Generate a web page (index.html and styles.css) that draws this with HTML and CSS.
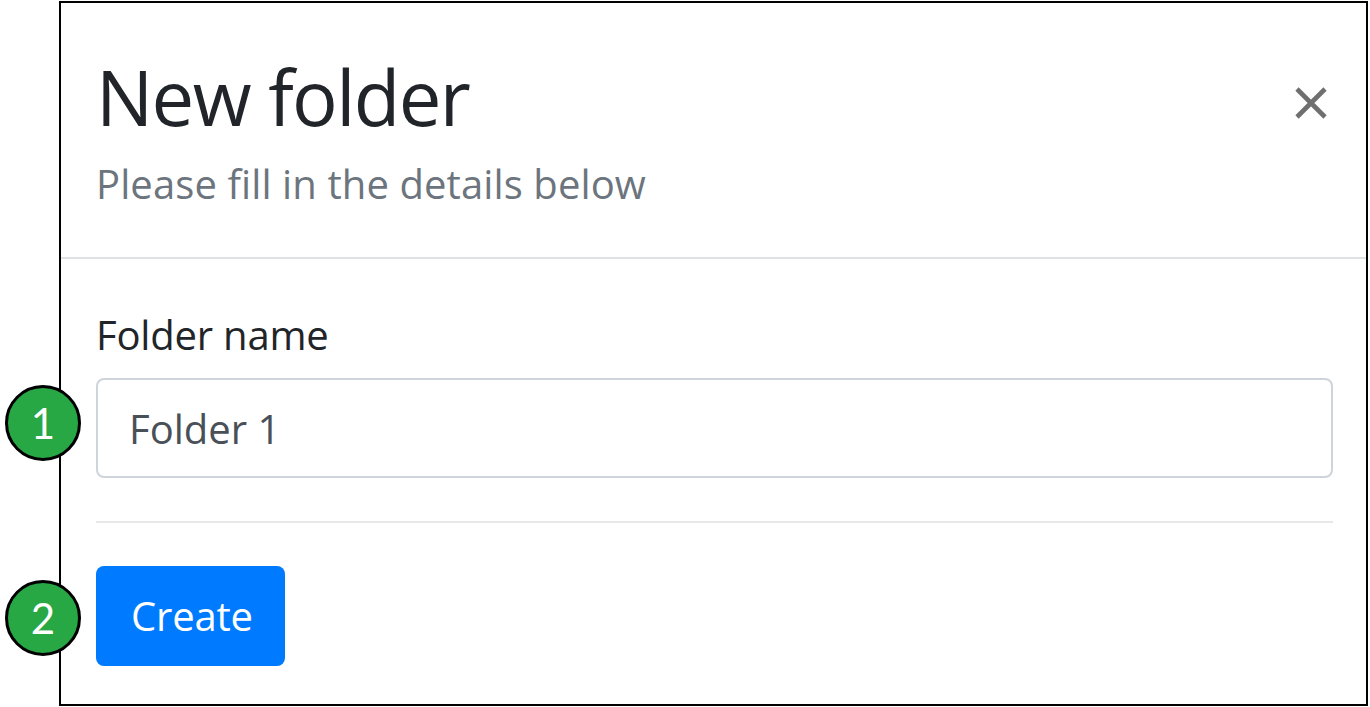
FILE: index.html
```html
<!DOCTYPE html>
<html lang="en">
<head>
<meta charset="utf-8">
<title>New folder</title>
<link rel="stylesheet" href="styles.css">
</head>
<body>
<div class="frame">
  <div class="header">
    <div class="heading">
      <h1 class="title">New folder</h1>
      <p class="subtitle">Please fill in the details below</p>
    </div>
    <button class="close" type="button" aria-label="Close">
      <svg width="32" height="32" viewBox="0 0 32 32"><path d="M2 2 L30 30 M30 2 L2 30" stroke="#6f6f6f" stroke-width="4.6" fill="none"/></svg>
    </button>
  </div>
  <div class="body">
    <label class="label" for="fname">Folder name</label>
    <div class="field">
      <span class="badge badge-1">1</span>
      <input id="fname" class="input" type="text" value="Folder 1">
    </div>
    <hr class="divider">
    <div class="actions">
      <span class="badge badge-2">2</span>
      <button class="btn" type="button">Create</button>
    </div>
  </div>
</div>
</body>
</html>
```
FILE: styles.css
```css
html, body {
  margin: 0;
  padding: 0;
  background: #ffffff;
}
body {
  font-family: "Open Sans", "Noto Sans", sans-serif;
  color: #212529;
  padding-top: 1px;
}
.frame {
  margin-left: 59px;
  width: 1309px;
  height: 705px;
  box-sizing: border-box;
  border: 2px solid #000;
  background: #fff;
}
.header {
  display: flex;
  justify-content: space-between;
  align-items: flex-start;
  padding: 54px 35px 49px 35px;
  border-bottom: 2px solid #dee2e6;
}
.title {
  margin: 0;
  font-size: 76px;
  line-height: 80px;
  font-weight: 500;
  letter-spacing: -1.6px;
  color: #212529;
}
.subtitle {
  margin: 23px 0 0 0;
  font-size: 40px;
  line-height: 48px;
  color: #6c757d;
  letter-spacing: 0.1px;
}
.close {
  margin: 30px 4px 0 0;
  padding: 0;
  border: 0;
  background: transparent;
  width: 32px;
  height: 32px;
  display: block;
}
.close svg {
  display: block;
}
.body {
  padding: 52px 33px 0 35px;
}
.label {
  display: block;
  font-size: 40px;
  line-height: 48px;
  letter-spacing: -0.2px;
  color: #212529;
}
.field {
  position: relative;
  margin-top: 19px;
}
.input {
  display: block;
  box-sizing: border-box;
  width: 100%;
  height: 100px;
  margin: 0;
  padding: 0 31px;
  border: 2px solid #ced4da;
  border-radius: 8px;
  font-family: "Open Sans", "Noto Sans", sans-serif;
  font-size: 40px;
  letter-spacing: 0;
  color: #495057;
  background: #fff;
  outline: none;
}
.divider {
  margin: 43px 0 0 0;
  border: 0;
  border-top: 2px solid #e6e8ea;
  height: 0;
}
.actions {
  position: relative;
  margin-top: 43px;
}
.btn {
  display: block;
  box-sizing: border-box;
  height: 100px;
  padding: 0 32px 0 35px;
  border: 0;
  border-radius: 8px;
  background: #007bff;
  color: #fff;
  font-family: "Open Sans", "Noto Sans", sans-serif;
  font-size: 40px;
  line-height: 48px;
  letter-spacing: -0.2px;
}
.badge {
  position: absolute;
  left: -91px;
  width: 76px;
  height: 76px;
  box-sizing: border-box;
  border: 3px solid #000;
  border-radius: 50%;
  background: #28a745;
  color: #fff;
  font-family: "Lato", "Open Sans", sans-serif;
  font-size: 42px;
  line-height: 70px;
  text-align: center;
}
.badge-1 {
  top: 7px;
}
.badge-2 {
  top: 14px;
}
```
